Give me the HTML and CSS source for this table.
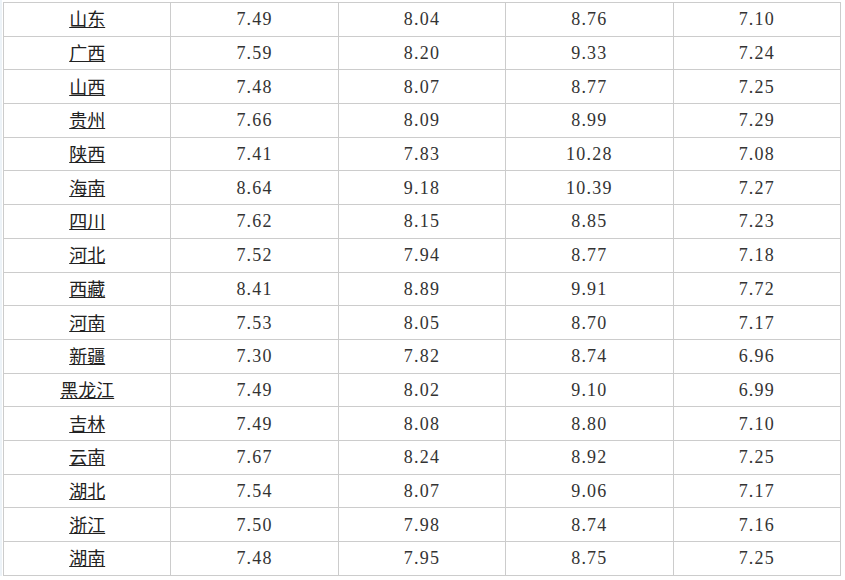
FILE: index.html
```html
<!DOCTYPE html>
<html lang="zh-CN">
<head>
<meta charset="utf-8">
<title>各省数据</title>
<link rel="stylesheet" href="styles.css">
</head>
<body>
<div class="wrap">
<table class="data">
<tbody>
<tr><td><a href="#">山东</a></td><td>7.49</td><td>8.04</td><td>8.76</td><td>7.10</td></tr>
<tr><td><a href="#">广西</a></td><td>7.59</td><td>8.20</td><td>9.33</td><td>7.24</td></tr>
<tr><td><a href="#">山西</a></td><td>7.48</td><td>8.07</td><td>8.77</td><td>7.25</td></tr>
<tr><td><a href="#">贵州</a></td><td>7.66</td><td>8.09</td><td>8.99</td><td>7.29</td></tr>
<tr><td><a href="#">陕西</a></td><td>7.41</td><td>7.83</td><td>10.28</td><td>7.08</td></tr>
<tr><td><a href="#">海南</a></td><td>8.64</td><td>9.18</td><td>10.39</td><td>7.27</td></tr>
<tr><td><a href="#">四川</a></td><td>7.62</td><td>8.15</td><td>8.85</td><td>7.23</td></tr>
<tr><td><a href="#">河北</a></td><td>7.52</td><td>7.94</td><td>8.77</td><td>7.18</td></tr>
<tr><td><a href="#">西藏</a></td><td>8.41</td><td>8.89</td><td>9.91</td><td>7.72</td></tr>
<tr><td><a href="#">河南</a></td><td>7.53</td><td>8.05</td><td>8.70</td><td>7.17</td></tr>
<tr><td><a href="#">新疆</a></td><td>7.30</td><td>7.82</td><td>8.74</td><td>6.96</td></tr>
<tr><td><a href="#">黑龙江</a></td><td>7.49</td><td>8.02</td><td>9.10</td><td>6.99</td></tr>
<tr><td><a href="#">吉林</a></td><td>7.49</td><td>8.08</td><td>8.80</td><td>7.10</td></tr>
<tr><td><a href="#">云南</a></td><td>7.67</td><td>8.24</td><td>8.92</td><td>7.25</td></tr>
<tr><td><a href="#">湖北</a></td><td>7.54</td><td>8.07</td><td>9.06</td><td>7.17</td></tr>
<tr><td><a href="#">浙江</a></td><td>7.50</td><td>7.98</td><td>8.74</td><td>7.16</td></tr>
<tr><td><a href="#">湖南</a></td><td>7.48</td><td>7.95</td><td>8.75</td><td>7.25</td></tr>
</tbody>
</table>
</div>
</body>
</html>
```
FILE: styles.css
```css
html, body {
  margin: 0;
  padding: 0;
  background: #ffffff;
}
body {
  border-left: 2px solid #edf3f8;
}
.wrap {
  padding: 2px 0 0 1px;
}
.data {
  border-collapse: collapse;
  table-layout: fixed;
  width: 838px;
  font-family: "Liberation Serif", "Noto Sans CJK SC", serif;
  font-size: 18px;
  color: #333333;
}
.data tr {
  height: 33.7px;
}
.data td {
  border: 1px solid #cccccc;
  padding: 0;
  text-align: center;
  vertical-align: middle;
  line-height: 20px;
  letter-spacing: 1.2px;
}
.data td a {
  color: #222222;
  text-decoration: underline;
  letter-spacing: 0;
  font-family: "Noto Sans CJK SC", sans-serif;
  font-size: 18px;
}
```
